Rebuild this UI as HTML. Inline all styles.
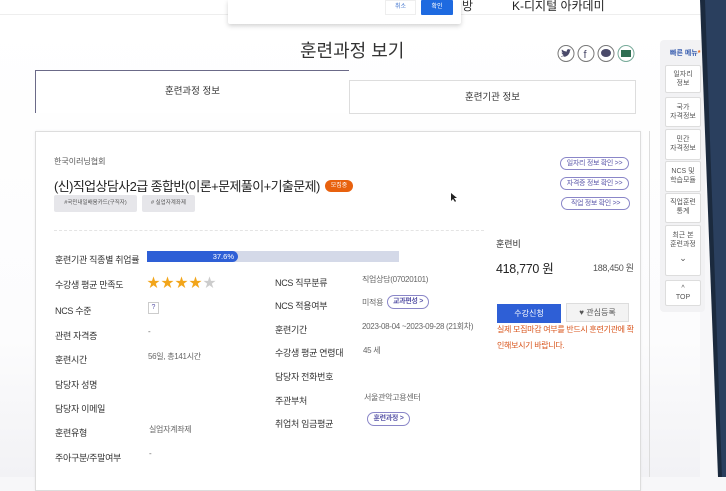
<!DOCTYPE html>
<html><head><meta charset="utf-8"><style>
*{margin:0;padding:0;box-sizing:border-box}
body{width:726px;height:477px;overflow:hidden;background:#f7f7f9;font-family:"Liberation Sans","Noto Sans CJK KR",sans-serif;color:#333;position:relative}
.a{position:absolute;white-space:nowrap}
.lbl{font-size:9px;color:#333;letter-spacing:-0.3px}
.val{font-size:8px;color:#666;letter-spacing:-0.3px}
.link{border:1px solid #8a86c8;border-radius:8px;font-size:7px;color:#5a56a8;text-align:center;line-height:11px;height:13px;letter-spacing:-0.3px}
.qm{position:absolute;left:665px;width:36px;background:#fff;border:1px solid #ddd;border-radius:2px;font-size:7px;color:#555;text-align:center;line-height:9px}
</style></head><body>
<div class="a" style="left:0;top:0;width:726px;height:15px;background:#fff;border-bottom:1px solid #eee"></div>
<div class="a" style="left:0;top:15px;width:700px;height:462px;background:linear-gradient(180deg,#fff 0%,#fcfcfd 70%,#f2f2f5 100%)"></div>
<div class="a" style="left:462px;top:-3px;font-size:12px;color:#333">방</div>
<div class="a" style="left:512px;top:-3px;font-size:12px;color:#222">K-디지털 아카데미</div>
<div class="a" style="left:228px;top:0;width:233px;height:24px;background:#fff;box-shadow:0 2px 5px rgba(0,0,0,.18);border-radius:0 0 2px 2px"></div>
<div class="a" style="left:385px;top:0;width:31px;height:15px;background:#fff;border:1px solid #eee;font-size:6px;color:#4a7bd0;text-align:center;line-height:13px">취소</div>
<div class="a" style="left:421px;top:0;width:32px;height:15px;background:#1e6ae0;font-size:6px;color:#fff;text-align:center;line-height:15px;border-radius:1px">확인</div>

<div class="a" style="left:300px;top:37px;font-size:18px;color:#333">훈련과정 보기</div>
<svg class="a" style="left:557px;top:44px" width="78" height="20">
<circle cx="9" cy="9.5" r="8" fill="#fff" stroke="#777"/><path d="M4.5 12q4 2 7-1.5 1.5-2 1.5-4l1.2-1-1.3.3q-1-1.2-2.5-.3-1 .8-.5 2-3 0-5-2-.8 2 1 3.2-1 0-1.300-.3 0 1.5 1.8 2.2-.8.2-1.2 0 .5 1.3 2 1.4-1.5 1-3 .8z" fill="#4a4a6a"/>
<circle cx="29" cy="9.5" r="8" fill="#fff" stroke="#777"/><text x="26.5" y="14" font-size="11" fill="#4a4a6a" font-family="Liberation Sans">f</text>
<circle cx="49" cy="9.5" r="8" fill="#fff" stroke="#777"/><ellipse cx="49" cy="9" rx="5" ry="4" fill="#4a4a6a"/>
<circle cx="69" cy="9.5" r="8" fill="#fff" stroke="#7a9"/><rect x="64" y="6" width="10" height="7" fill="#2f6e52"/>
</svg>

<div class="a" style="left:35px;top:70px;width:314px;height:43px;background:#fff;border-top:1.5px solid #6b6a88;border-left:1px solid #6b6a88;font-size:9.5px;text-align:center;line-height:42px">훈련과정 정보</div>
<div class="a" style="left:349px;top:80px;width:287px;height:34px;background:#fff;border:1px solid #ddd;font-size:9.5px;text-align:center;line-height:34px">훈련기관 정보</div>

<div class="a" style="left:35px;top:131px;width:606px;height:360px;background:#fff;border:1px solid #ddd;box-shadow:0 0 3px rgba(0,0,0,.05)"></div>
<div class="a" style="left:54px;top:156px;font-size:8px;color:#555">한국이러닝협회</div>
<div class="a" style="left:54px;top:176px;font-size:13px;letter-spacing:-0.6px;color:#222">(신)직업상담사2급 종합반(이론+문제풀이+기출문제)</div>
<div class="a" style="left:325px;top:180px;width:28px;height:12px;background:#e8610e;border-radius:6px;font-size:6px;color:#fff;text-align:center;line-height:12px">모집중</div>
<div class="a" style="left:54px;top:195px;width:83px;height:17px;background:#e6e6ea;border-radius:2px;font-size:5.5px;color:#555;text-align:center;line-height:17px">#국민내일배움카드(구직자)</div>
<div class="a" style="left:142px;top:195px;width:53px;height:17px;background:#e6e6ea;border-radius:2px;font-size:5.5px;color:#555;text-align:center;line-height:17px"># 실업자계좌제</div>
<div class="a" style="left:54px;top:230px;width:430px;border-top:1px dashed #e4e4e4"></div>

<div class="a link" style="left:560px;top:157px;width:69px">일자리 정보 확인 &gt;&gt;</div>
<div class="a link" style="left:560px;top:177px;width:69px">자격증 정보 확인 &gt;&gt;</div>
<div class="a link" style="left:561px;top:197px;width:69px">직업 정보 확인 &gt;&gt;</div>

<div class="a" style="left:496px;top:237px;font-size:9px">훈련비</div>
<div class="a" style="left:496px;top:258px;font-size:12.5px;color:#222;letter-spacing:-0.3px">418,770 원</div>
<div class="a" style="left:593px;top:261px;font-size:9px;color:#555;letter-spacing:-0.3px">188,450 원</div>
<div class="a" style="left:497px;top:304px;width:64px;height:19px;background:#2e5fd6;font-size:8px;color:#fff;text-align:center;line-height:19px">수강신청</div>
<div class="a" style="left:566px;top:303px;width:63px;height:19px;background:#f3f3f3;border:1px solid #ddd;font-size:8px;color:#555;text-align:center;line-height:17px">♥ 관심등록</div>
<div class="a" style="left:497px;top:322px;font-size:8px;letter-spacing:-0.3px;color:#d8531a;line-height:16px;white-space:normal;width:140px;word-break:break-all">실제 모집마감 여부를 반드시 훈련기관에 확인해보시기 바랍니다.</div>
<div class="a" style="left:649px;top:131px;width:1px;height:346px;background:#ddd"></div>

<div class="a lbl" style="left:55px;top:253px">훈련기관 직종별 취업률</div>
<div class="a" style="left:147px;top:251px;width:252px;height:11px;background:#d4d9e8"></div>
<div class="a" style="left:147px;top:251px;width:91px;height:11px;background:#2e5fd6;border-radius:0 6px 6px 0;font-size:7.5px;color:#fff;text-align:right;padding-right:4px;line-height:11px">37.6%</div>
<div class="a lbl" style="left:55px;top:278px">수강생 평균 만족도</div>
<div class="a" style="left:147px;top:272px;font-size:13px;color:#f2a51a;letter-spacing:1px">★★★★<span style="color:#ccc">★</span></div>
<div class="a lbl" style="left:55px;top:304px">NCS 수준</div>
<div class="a" style="left:148px;top:302px;width:11px;height:12px;border:1px solid #ccc;font-size:7px;color:#5a56a8;text-align:center;line-height:10px">?</div>
<div class="a lbl" style="left:55px;top:329px">관련 자격증</div><div class="a val" style="left:148px;top:327px">-</div>
<div class="a lbl" style="left:55px;top:353px">훈련시간</div><div class="a val" style="left:148px;top:351px">56일, 총141시간</div>
<div class="a lbl" style="left:55px;top:378px">담당자 성명</div>
<div class="a lbl" style="left:55px;top:402px">담당자 이메일</div>
<div class="a lbl" style="left:55px;top:426px">훈련유형</div><div class="a val" style="left:149px;top:424px">실업자계좌제</div>
<div class="a lbl" style="left:55px;top:451px">주아구분/주말여부</div><div class="a val" style="left:149px;top:449px">-</div>

<div class="a lbl" style="left:275px;top:276px">NCS 직무분류</div><div class="a val" style="left:362px;top:274px">직업상담(07020101)</div>
<div class="a lbl" style="left:275px;top:299px">NCS 적용여부</div><div class="a val" style="left:362px;top:297px">미적용</div>
<div class="a link" style="left:387px;top:295px;width:42px;height:14px;font-weight:bold;line-height:12px">교과편성 &gt;</div>
<div class="a lbl" style="left:275px;top:323px">훈련기간</div><div class="a val" style="left:362px;top:321px">2023-08-04 ~2023-09-28 (21회차)</div>
<div class="a lbl" style="left:275px;top:346px">수강생 평균 연령대</div><div class="a val" style="left:363px;top:345px">45 세</div>
<div class="a lbl" style="left:275px;top:370px">담당자 전화번호</div>
<div class="a lbl" style="left:275px;top:394px">주관부처</div><div class="a val" style="left:364px;top:392px">서울관악고용센터</div>
<div class="a lbl" style="left:275px;top:417px">취업처 임금평균</div>
<div class="a link" style="left:367px;top:412px;width:43px;height:14px;font-weight:bold;line-height:12px">훈련과정 &gt;</div>

<div class="a" style="left:660px;top:40px;width:45px;height:272px;background:#f2f2f4;border-radius:4px"></div>
<div class="a" style="left:670px;top:48px;font-size:7px;color:#3a5fb0;font-weight:bold">빠른 메뉴<span style="color:#e8610e">*</span></div>
<div class="qm" style="top:65px;height:28px;padding-top:4px">일자리<br>정보</div>
<div class="qm" style="top:97px;height:30px;padding-top:5px">국가<br>자격정보</div>
<div class="qm" style="top:129px;height:31px;padding-top:5px">민간<br>자격정보</div>
<div class="qm" style="top:161px;height:31px;padding-top:5px">NCS 및<br>학습모듈</div>
<div class="qm" style="top:193px;height:30px;padding-top:4px">직업훈련<br>통계</div>
<div class="qm" style="top:225px;height:51px;padding-top:5px">최근 본<br>훈련과정<br><span style="font-size:9px;line-height:18px">⌄</span></div>
<div class="qm" style="top:280px;height:26px;padding-top:3px">^<br>TOP</div>

<svg class="a" style="left:0;top:0" width="726" height="477"><polygon points="700,0 726,0 726,477 718,477" fill="#1b2a3e"/><polygon points="705,0 726,0 726,477 722,477" fill="#2a3f5e"/></svg>
<svg class="a" style="left:450px;top:192px" width="8" height="11"><path d="M1 1v8l2-2 2 3 1-1-2-3h3z" fill="#222"/></svg>
</body></html>
